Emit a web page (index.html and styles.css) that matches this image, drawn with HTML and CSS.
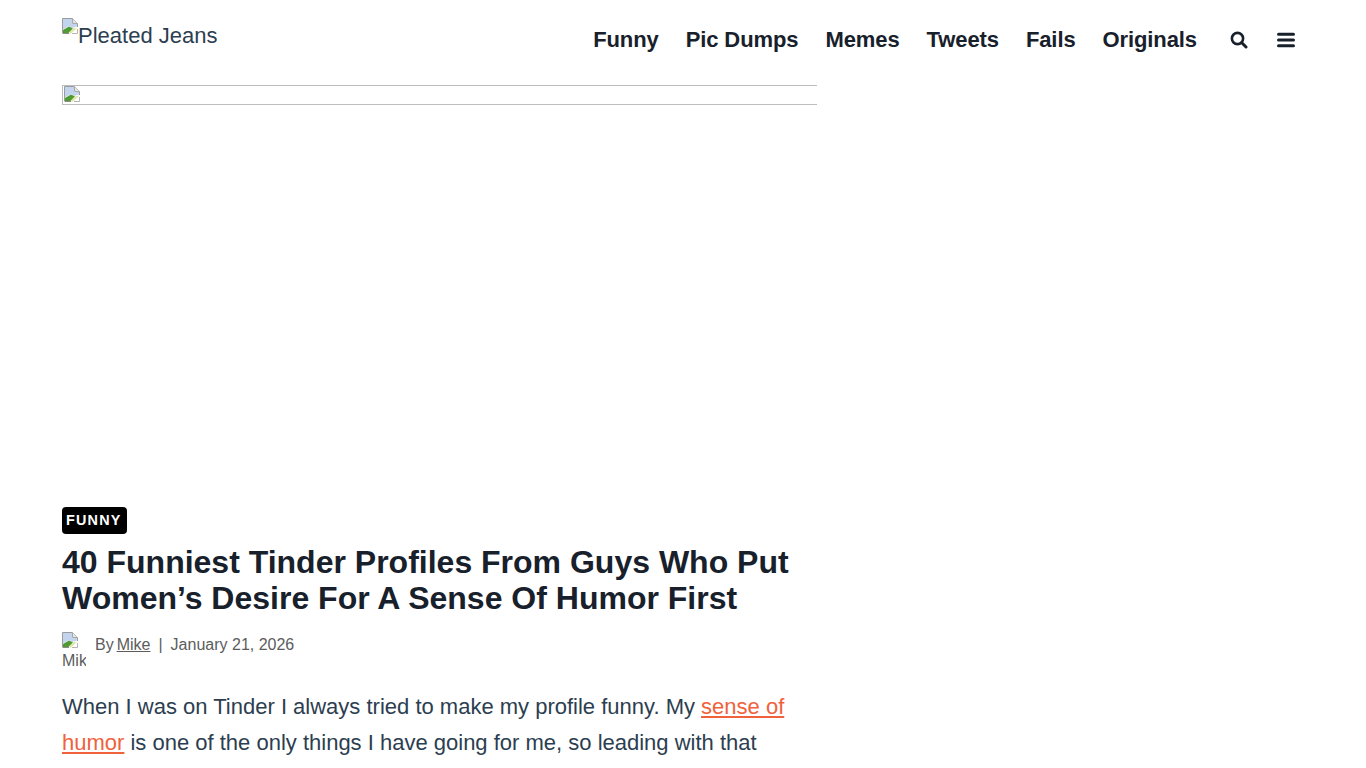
FILE: index.html
```html
<!DOCTYPE html>
<html lang="en">
<head>
<meta charset="utf-8">
<title>40 Funniest Tinder Profiles</title>
<link rel="stylesheet" href="styles.css">
</head>
<body>
<svg class="defs" width="0" height="0" aria-hidden="true">
  <symbol id="broken" viewBox="0 0 16 16">
    <path d="M0.5 15.5V0.5H10.5L15.5 5.5V9" fill="#fff" stroke="#9c9c9c"/>
    <path d="M10.5 0.5V5.5H15.5" fill="#e4e4e4" stroke="#a8a8a8"/>
    <path d="M1 1H10V6H15V8.5L10 10L7 8L1 11.5Z" fill="#c3d4ee"/>
    <path d="M1 15.5V12L7 8.5L11 10.5L6 15.5Z" fill="#4f9a32"/>
    <path d="M6 15.5L11 10.5L15.5 9.5L9 15.5Z" fill="#dfe7a6"/>
    <path d="M1 15.5H7" stroke="#8a8a8a"/>
    <path d="M15.5 11V15.5H10" fill="none" stroke="#b5b5b5"/>
  </symbol>
</svg>
<div class="page">
  <header class="site-header">
    <a class="logo" href="#"><svg class="broken"><use href="#broken"/></svg><span class="logo-text">Pleated Jeans</span></a>
    <nav class="nav">
      <a href="#">Funny</a>
      <a href="#">Pic Dumps</a>
      <a href="#">Memes</a>
      <a href="#">Tweets</a>
      <a href="#">Fails</a>
      <a href="#">Originals</a>
      <span class="nav-icons">
        <svg class="icon" viewBox="0 0 18 18"><circle cx="7.5" cy="7.5" r="5.6" fill="none" stroke="#18212b" stroke-width="2.6"/><path d="M11.8 11.8L16 16" stroke="#18212b" stroke-width="3" stroke-linecap="round"/></svg>
        <svg class="icon" viewBox="0 0 18 18"><path d="M1.5 3.2H16.5M1.5 9H16.5M1.5 14.8H16.5" stroke="#18212b" stroke-width="3" stroke-linecap="round"/></svg>
      </span>
    </nav>
  </header>
  <main class="article">
    <div class="hero"><svg class="broken"><use href="#broken"/></svg></div>
    <a class="tag" href="#">FUNNY</a>
    <h1 class="title">40 Funniest Tinder Profiles From Guys Who Put Women’s Desire For A Sense Of Humor First</h1>
    <div class="meta">
      <div class="avatar"><svg class="broken"><use href="#broken"/></svg><span class="avatar-alt">Mike</span></div>
      <span class="by">By</span><a class="author" href="#">Mike</a><span class="sep">|</span><span>January 21, 2026</span>
    </div>
    <p class="body-text">When I was on Tinder I always tried to make my profile funny. My <a href="#">sense of humor</a> is one of the only things I have going for me, so leading with that</p>
  </main>
</div>
</body>
</html>
```
FILE: styles.css
```css
html, body {
  margin: 0;
  padding: 0;
  height: 768px;
  overflow: hidden;
  background: #fff;
  font-family: "Liberation Sans", Arial, sans-serif;
  color: #2c3e50;
}
a { color: inherit; }
.defs { display: block; height: 0; }
.broken { display: block; width: 16px; height: 16px; flex: none; }
.page { padding: 0 62px; }
.site-header {
  display: flex;
  justify-content: space-between;
  align-items: flex-start;
  height: 85px;
}
.logo {
  display: flex;
  align-items: flex-start;
  padding-top: 18px;
  font-size: 22px;
  line-height: 34px;
  text-decoration: none;
}
.logo-text { padding-top: 1px; }
.nav {
  display: flex;
  align-items: center;
  gap: 27px;
  height: 80px;
  margin-right: 9px;
  font-size: 22px;
  font-weight: 700;
  letter-spacing: -0.1px;
  color: #18212b;
}
.nav a { text-decoration: none; }
.nav-icons { display: flex; align-items: center; gap: 29px; margin-left: 6px; }
.icon { display: block; width: 18px; height: 18px; }
.article { width: 755px; }
.hero {
  box-sizing: border-box;
  height: 20px;
  margin-bottom: 402px;
  border: 1px solid #bdbdbd;
  border-right: 0;
  padding-left: 1px;
}
.tag {
  display: inline-block;
  padding: 0 5px 0 4px;
  background: #000;
  color: #fff;
  border-radius: 4px;
  font-size: 14.4px;
  font-weight: 700;
  letter-spacing: 1.2px;
  line-height: 27px;
  text-decoration: none;
  vertical-align: top;
}
.title {
  margin: 10px 0 16px;
  font-size: 32px;
  line-height: 36px;
  font-weight: 700;
  color: #18212b;
}
.meta {
  display: flex;
  align-items: flex-start;
  height: 36px;
  font-size: 16px;
  line-height: 26px;
  color: #5c5c5c;
}
.avatar {
  width: 24px;
  height: 36px;
  margin-right: 9px;
  overflow: hidden;
  line-height: 18px;
}
.avatar .broken { margin-bottom: 4px; }
.avatar-alt { display: block; white-space: nowrap; }
.by { margin-right: 3px; }
.sep { margin: 0 8px; }
.author { text-decoration: underline; }
.body-text {
  margin: 21px 0 0;
  font-size: 22px;
  line-height: 36px;
}
.body-text a { color: #f0623c; }
```
